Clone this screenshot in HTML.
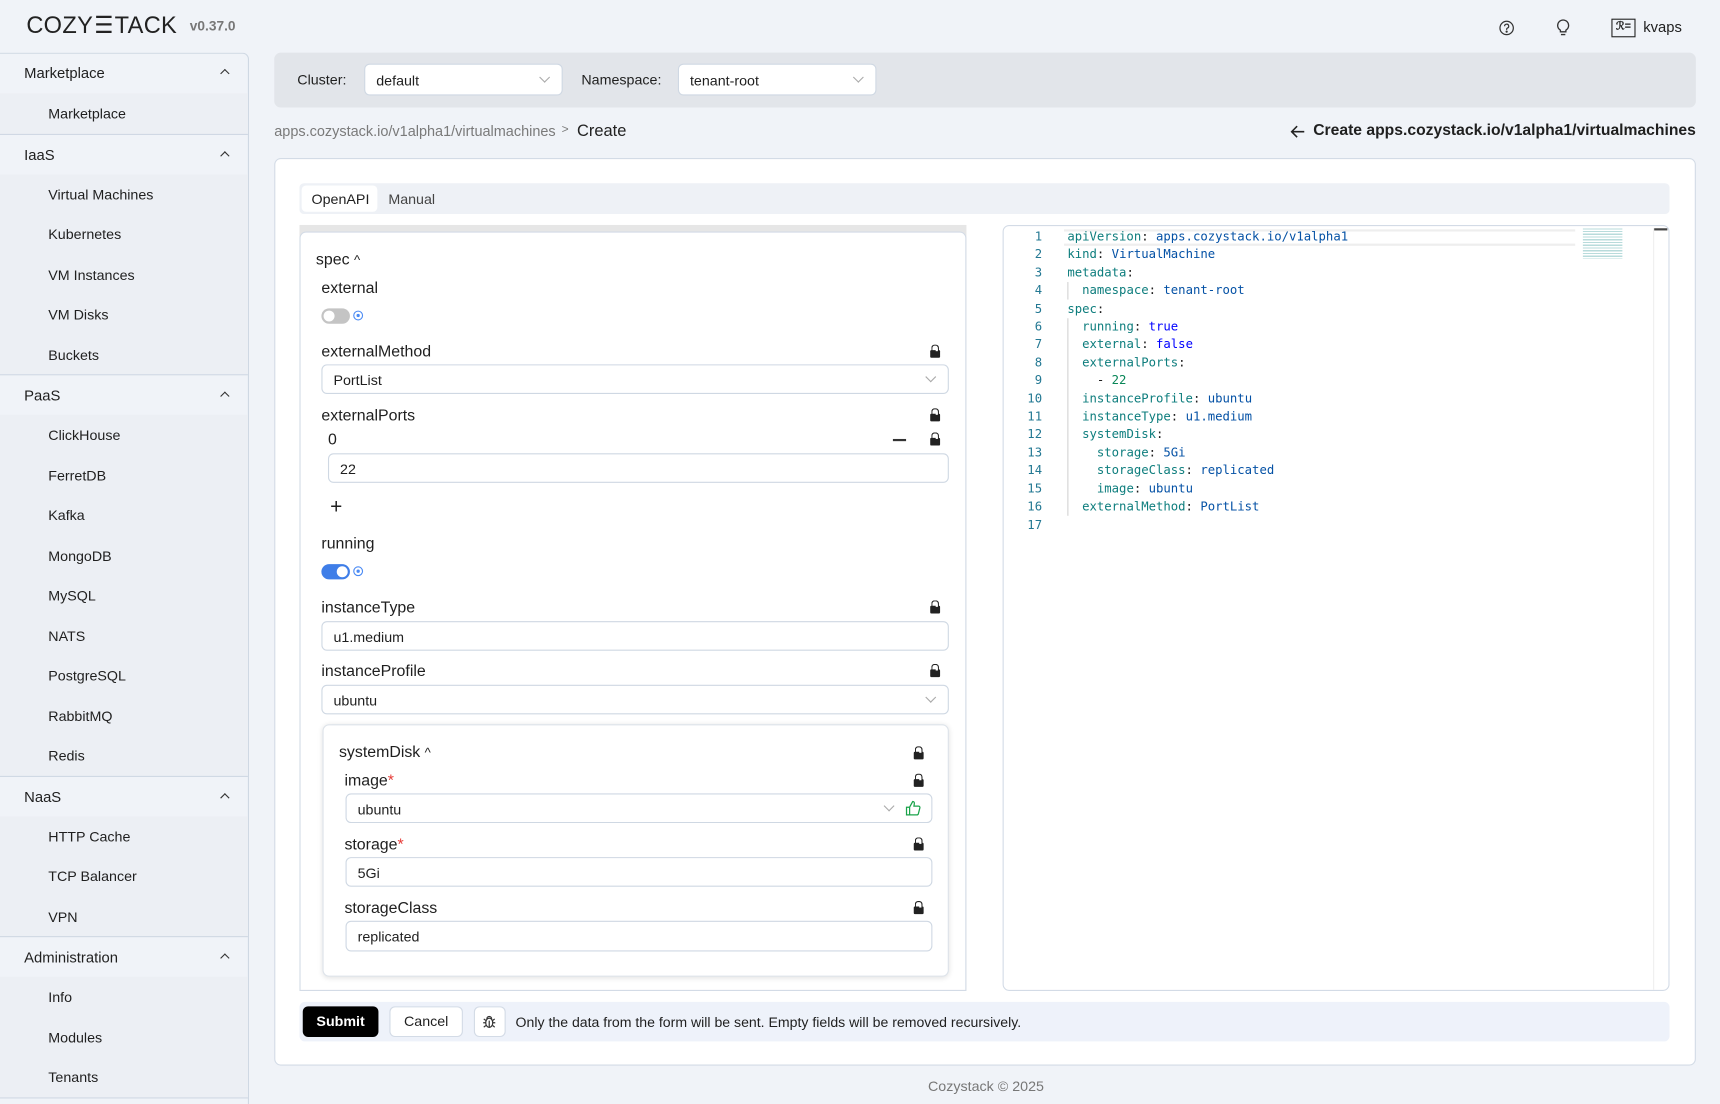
<!DOCTYPE html>
<html><head><meta charset="utf-8">
<style>
*{box-sizing:border-box;margin:0;padding:0}
html,body{width:1720px;height:1104px;overflow:hidden;background:#f0f3f8;font-family:"Liberation Sans",Arial,sans-serif;color:#1f1f1f}
#w{position:absolute;left:0;top:0;width:1568px;height:1006px;transform:scale(1.09694,1.0974);transform-origin:0 0}
.a{position:absolute;white-space:nowrap}
.sb{position:absolute;left:0;top:48px;width:227px;height:958px;border-right:1px solid #cfd8e3;border-top:1px solid #cfd8e3;border-top-right-radius:6px;overflow:hidden}
.h{position:absolute;left:0;width:227px;height:37px;font-size:13.5px;padding:11px 0 0 22px;border-top:1px solid #cfd8e3}
.h:after{content:"";position:absolute;right:19px;top:16px;width:5px;height:5px;border-left:1.3px solid #333;border-top:1.3px solid #333;transform:rotate(45deg)}
.it{position:absolute;left:0;width:227px;background:#eceff4}
.it div{height:36.5px;font-size:13px;padding:11px 0 0 44px}
.sel{position:absolute;background:#fff;border:1px solid #cfd8e3;border-radius:5px;font-size:13px;padding-left:10px}
.chev{position:absolute;width:7px;height:7px;border-right:1px solid #aaa;border-bottom:1px solid #aaa;transform:rotate(45deg)}
.lbl{position:absolute;font-size:14.5px;color:#1f1f1f}
.lock{position:absolute;width:9px;height:7px;background:#222;border-radius:1px}
.lock:before{content:"";position:absolute;left:1px;top:-5px;width:5px;height:6px;border:1.4px solid #222;border-bottom:none;border-radius:3px 3px 0 0}
.lock:after{content:"";position:absolute;left:5px;top:-1px;width:2px;height:2px;background:#fff}
.code{position:absolute;font-family:"DejaVu Sans Mono","Liberation Mono",monospace;font-size:11.2px;line-height:16.4px}
.k{color:#0d7d7d}.s{color:#0451a5}.b{color:#0000ff}.n{color:#098658}
</style></head><body><div id="w">
<div class="a" style="left:24px;top:11px;font-size:21.5px;letter-spacing:0.3px;color:#222">COZY<span style="display:inline-block;transform:scaleX(0.9)">☰</span>TACK</div>
<div class="a" style="left:173px;top:17px;font-size:12.5px;font-weight:bold;color:#777">v0.37.0</div>
<svg class="a" style="left:1366px;top:18px" width="15" height="15" viewBox="0 0 16 16" fill="none" stroke="#333" stroke-width="1.2"><circle cx="8" cy="8" r="6.5"/><path d="M6 6.3a2 2 0 1 1 2.6 1.9c-.5.2-.6.5-.6 1v.6"/><circle cx="8" cy="11.5" r=".5" fill="#333"/></svg>
<svg class="a" style="left:1418px;top:17px" width="14" height="17" viewBox="0 0 14 17" fill="none" stroke="#333" stroke-width="1.2"><path d="M4.5 12v-1.5C3 9.5 2 8 2 6.2a5 5 0 0 1 10 0c0 1.8-1 3.3-2.5 4.3V12zM5 14.5h4"/></svg>
<div class="a" style="left:1469px;top:17px;width:22px;height:17px;border:1.6px solid #222;font-size:10px;font-weight:bold;text-align:center;line-height:13px">ℛ=</div>
<div class="a" style="left:1498px;top:17px;font-size:13.5px">kvaps</div>

<div class="sb">
<div class="h" style="top:-1px;border-top:none">Marketplace</div>
<div class="it" style="top:36px"><div>Marketplace</div></div>
<div class="h" style="top:72.5px">IaaS</div>
<div class="it" style="top:109.5px"><div>Virtual Machines</div><div>Kubernetes</div><div>VM Instances</div><div>VM Disks</div><div>Buckets</div></div>
<div class="h" style="top:292px">PaaS</div>
<div class="it" style="top:329px"><div>ClickHouse</div><div>FerretDB</div><div>Kafka</div><div>MongoDB</div><div>MySQL</div><div>NATS</div><div>PostgreSQL</div><div>RabbitMQ</div><div>Redis</div></div>
<div class="h" style="top:657.5px">NaaS</div>
<div class="it" style="top:694.5px"><div>HTTP Cache</div><div>TCP Balancer</div><div>VPN</div></div>
<div class="h" style="top:804px">Administration</div>
<div class="it" style="top:841px"><div>Info</div><div>Modules</div><div>Tenants</div></div>
<div class="h" style="top:950.5px"></div>
</div>

<div class="a" style="left:250px;top:48px;width:1296px;height:50px;background:#e2e5ea;border-radius:6px"></div>
<div class="a" style="left:271px;top:65px;font-size:13px">Cluster:</div>
<div class="sel" style="left:332px;top:58px;width:181px;height:29px;padding-top:7px">default<span class="chev" style="right:12px;top:8px"></span></div>
<div class="a" style="left:530px;top:65px;font-size:13px">Namespace:</div>
<div class="sel" style="left:618px;top:58px;width:181px;height:29px;padding-top:7px">tenant-root<span class="chev" style="right:12px;top:8px"></span></div>

<div class="a" style="left:250px;top:112px;font-size:13.2px;color:#7a7a7a">apps.cozystack.io/v1alpha1/virtualmachines</div>
<div class="a" style="left:512px;top:112px;font-size:11px;color:#7a7a7a">&gt;</div>
<div class="a" style="left:526px;top:111px;font-size:15px;color:#222">Create</div>
<svg class="a" style="left:1176px;top:114px" width="14" height="12" viewBox="0 0 14 12" fill="none" stroke="#222" stroke-width="1.4"><path d="M13 6H1.5M6.5 1L1.5 6l5 5"/></svg>
<div class="a" style="right:22px;top:111px;font-size:14.3px;font-weight:bold">Create apps.cozystack.io/v1alpha1/virtualmachines</div>

<div class="a" style="left:250px;top:144px;width:1296px;height:827px;background:#fff;border:1px solid #d3dbe6;border-radius:6px"></div>
<div class="a" style="left:273px;top:167px;width:1249px;height:28px;background:#eef1f6;border-radius:4px"></div>
<div class="a" style="left:275px;top:169px;width:69px;height:24px;background:#fff;border-radius:4px;font-size:13px;padding:5px 0 0 9px">OpenAPI</div>
<div class="a" style="left:354px;top:174px;font-size:13px;color:#444">Manual</div>

<div class="a" style="left:273px;top:205px;width:608px;height:698px;background:#e6e6e6"></div>
<div class="a" style="left:273px;top:211px;width:608px;height:692px;background:#fff;border:1px solid #d3dbe6;border-radius:6px 6px 0 0"></div>
<div class="lbl" style="left:288px;top:229px">spec <span style="font-size:12px">^</span></div>
<div class="lbl" style="left:293px;top:255px">external</div>
<div class="a" style="left:293px;top:281px;width:26px;height:14px;border-radius:7px;background:#c4c4c4"></div>
<div class="a" style="left:295px;top:283px;width:10px;height:10px;border-radius:5px;background:#fff"></div>
<div class="a" style="left:322px;top:283px;width:9px;height:9px;border-radius:5px;border:1px solid #4a8af4"><div style="margin:2px;width:3px;height:3px;background:#4a8af4;border-radius:2px"></div></div>
<div class="lbl" style="left:293px;top:313px">externalMethod</div><div class="lock" style="left:848px;top:319px"></div>
<div class="sel" style="left:293px;top:332px;width:572px;height:27px;padding-top:6px">PortList<span class="chev" style="right:12px;top:7px"></span></div>
<div class="lbl" style="left:293px;top:371px">externalPorts</div><div class="lock" style="left:848px;top:377px"></div>
<div class="lbl" style="left:299px;top:393px">0</div>
<div class="a" style="left:814px;top:400px;width:12px;height:1.5px;background:#333"></div><div class="lock" style="left:848px;top:399px"></div>
<div class="sel" style="left:299px;top:413px;width:566px;height:27px;padding-top:6px">22</div>
<div class="a" style="left:301px;top:452px;font-size:19px;font-weight:300">+</div>
<div class="lbl" style="left:293px;top:488px">running</div>
<div class="a" style="left:293px;top:514px;width:26px;height:14px;border-radius:7px;background:#3f7ee8"></div>
<div class="a" style="left:307px;top:516px;width:10px;height:10px;border-radius:5px;background:#fff"></div>
<div class="a" style="left:322px;top:516px;width:9px;height:9px;border-radius:5px;border:1px solid #4a8af4"><div style="margin:2px;width:3px;height:3px;background:#4a8af4;border-radius:2px"></div></div>
<div class="lbl" style="left:293px;top:546px">instanceType</div><div class="lock" style="left:848px;top:552px"></div>
<div class="sel" style="left:293px;top:566px;width:572px;height:27px;padding-top:6px">u1.medium</div>
<div class="lbl" style="left:293px;top:604px">instanceProfile</div><div class="lock" style="left:848px;top:610px"></div>
<div class="sel" style="left:293px;top:624px;width:572px;height:27px;padding-top:6px">ubuntu<span class="chev" style="right:12px;top:7px"></span></div>

<div class="a" style="left:294px;top:660px;width:571px;height:230px;background:#fff;border:1px solid #dde3ea;border-radius:6px;box-shadow:0 1px 5px rgba(0,0,0,.12)"></div>
<div class="lbl" style="left:309px;top:678px">systemDisk <span style="font-size:12px">^</span></div><div class="lock" style="left:833px;top:685px"></div>
<div class="lbl" style="left:314px;top:704px">image<span style="color:#e53935">*</span></div><div class="lock" style="left:833px;top:710px"></div>
<div class="sel" style="left:315px;top:723px;width:535px;height:27px;padding-top:6px">ubuntu<span class="chev" style="right:35px;top:7px"></span>
<svg style="position:absolute;right:9px;top:5px" width="15" height="15" viewBox="0 0 16 16" fill="none" stroke="#1aa34a" stroke-width="1.2"><path d="M1.5 7h3v7.5h-3zM4.5 7l3-5.5c1.2 0 1.8.8 1.6 2L8.7 6h4.6c.9 0 1.4.8 1.2 1.6l-1.5 5.8c-.2.7-.7 1.1-1.4 1.1H4.5"/></svg></div>
<div class="lbl" style="left:314px;top:762px">storage<span style="color:#e53935">*</span></div><div class="lock" style="left:833px;top:768px"></div>
<div class="sel" style="left:315px;top:781px;width:535px;height:27px;padding-top:6px">5Gi</div>
<div class="lbl" style="left:314px;top:820px">storageClass</div><div class="lock" style="left:833px;top:826px"></div>
<div class="sel" style="left:315px;top:839px;width:535px;height:28px;padding-top:6px">replicated</div>

<div class="a" style="left:914px;top:205px;width:608px;height:698px;background:#fff;border:1px solid #d3dbe6;border-radius:6px"></div>
<div class="a" style="left:970px;top:209px;width:466px;height:15px;border-top:2px solid #eee;border-bottom:2px solid #eee"></div>
<div class="a" style="left:1507px;top:208px;width:1px;height:694px;background:#eee"></div>
<div class="a" style="left:1508px;top:208px;width:12px;height:2px;background:#444"></div>
<div class="a" style="left:1443px;top:208px;width:36px;height:28px;background:repeating-linear-gradient(#9cc 0 1px,transparent 1px 2.5px);opacity:.7"></div>
<div class="code" style="left:920px;top:208px;width:30px;text-align:right;color:#237893">1<br>2<br>3<br>4<br>5<br>6<br>7<br>8<br>9<br>10<br>11<br>12<br>13<br>14<br>15<br>16<br>17</div>
<div class="a" style="left:973px;top:257px;width:1px;height:16px;background:#d3d3d3"></div>
<div class="a" style="left:973px;top:290px;width:1px;height:180px;background:#d3d3d3"></div>
<div class="code" style="left:973px;top:208px;white-space:pre"><span class="k">apiVersion</span>: <span class="s">apps.cozystack.io/v1alpha1</span>
<span class="k">kind</span>: <span class="s">VirtualMachine</span>
<span class="k">metadata</span>:
  <span class="k">namespace</span>: <span class="s">tenant-root</span>
<span class="k">spec</span>:
  <span class="k">running</span>: <span class="b">true</span>
  <span class="k">external</span>: <span class="b">false</span>
  <span class="k">externalPorts</span>:
    - <span class="n">22</span>
  <span class="k">instanceProfile</span>: <span class="s">ubuntu</span>
  <span class="k">instanceType</span>: <span class="s">u1.medium</span>
  <span class="k">systemDisk</span>:
    <span class="k">storage</span>: <span class="s">5Gi</span>
    <span class="k">storageClass</span>: <span class="s">replicated</span>
    <span class="k">image</span>: <span class="s">ubuntu</span>
  <span class="k">externalMethod</span>: <span class="s">PortList</span>
</div>

<div class="a" style="left:273px;top:913px;width:1249px;height:36px;background:#eef2fa;border-radius:5px"></div>
<div class="a" style="left:276px;top:917px;width:69px;height:28px;background:#000;border-radius:5px;color:#fff;font-size:13px;font-weight:bold;text-align:center;line-height:28px">Submit</div>
<div class="a" style="left:355px;top:917px;width:67px;height:28px;background:#fff;border:1px solid #d3dbe6;border-radius:5px;font-size:13px;text-align:center;line-height:26px">Cancel</div>
<div class="a" style="left:432px;top:917px;width:29px;height:28px;background:#fff;border:1px solid #d3dbe6;border-radius:5px"></div>
<svg class="a" style="left:439px;top:924px" width="14" height="14" viewBox="0 0 14 14" fill="none" stroke="#333" stroke-width="1.1"><ellipse cx="7" cy="8" rx="3.2" ry="4.2"/><path d="M4.8 4.5a2.2 2.2 0 0 1 4.4 0M1.5 8h2.3M10.2 8h2.3M2 4.5l1.8 1.3M12 4.5l-1.8 1.3M2 12l1.9-1.5M12 12l-1.9-1.5M7 6v6"/></svg>
<div class="a" style="left:470px;top:924px;font-size:12.85px">Only the data from the form will be sent. Empty fields will be removed recursively.</div>

<div class="a" style="left:846px;top:982px;font-size:13px;color:#777">Cozystack © 2025</div>
</div></body></html>
